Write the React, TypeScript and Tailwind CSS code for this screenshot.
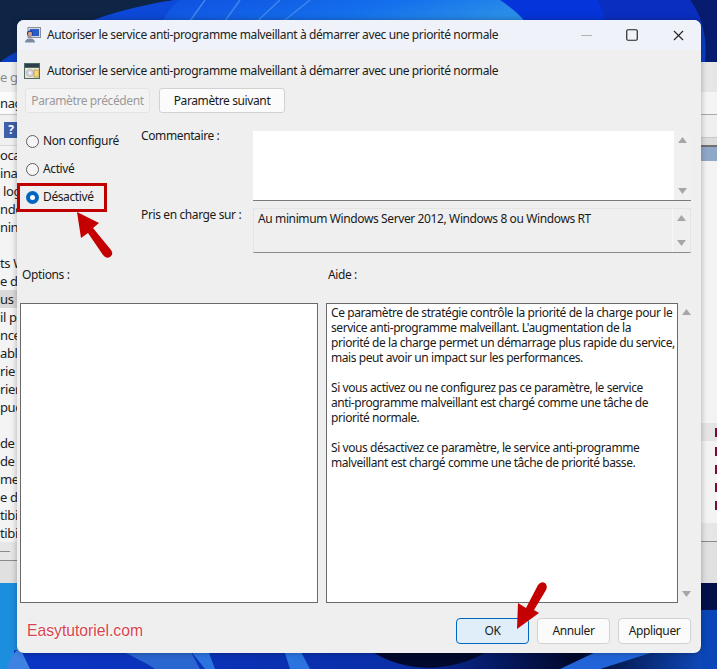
import { Minus, Square, X } from 'lucide-react'

const title = 'Autoriser le service anti-programme malveillant à démarrer avec une priorité normale'

const leftRows = [
  'ocal', 'inat', ' log', 'ndo', 'nini', '', 'ts W', 'e de', 'us M', 'il pl', 'nce', 'able', 'rie', 'rier', 'puc', '', 'de r', 'de s', 'mer', 'e de', 'tibi', 'tibi',
]

function Wallpaper() {
  return (
    <svg className="absolute inset-0" width="717" height="669" viewBox="0 0 717 669">
      <defs>
        <linearGradient id="main" x1="0" y1="0" x2="1" y2="0.3">
          <stop offset="0" stopColor="#0f4fe0" />
          <stop offset="0.6" stopColor="#1470ec" />
          <stop offset="1" stopColor="#2a8fe8" />
        </linearGradient>
        <linearGradient id="low" x1="0" y1="0" x2="1" y2="0">
          <stop offset="0" stopColor="#0b35c4" />
          <stop offset="0.55" stopColor="#0a2fa8" />
          <stop offset="0.8" stopColor="#01082a" />
          <stop offset="1" stopColor="#1050c8" />
        </linearGradient>
      </defs>
      <rect width="717" height="669" fill="#0f2546" />
      <path d="M0 62 C30 40 110 10 175 0 L717 0 L717 70 L0 70 Z" fill="#0a3fc4" />
      <path d="M70 30 C100 15 140 5 175 0 L360 0 L340 30 Z" fill="#0d49d8" />
      <path d="M158 30 C165 15 172 5 180 0 L530 0 C520 10 530 20 532 30 Z" fill="url(#main)" />
      <path d="M500 0 L598 0 C605 10 608 20 610 30 L532 30 C525 20 515 10 500 0 Z" fill="#0535da" />
      <path d="M598 0 L695 0 C702 20 702 45 700 70 L610 70 C610 40 605 15 598 0 Z" fill="#0a2fc0" />
      <path d="M690 0 L717 0 L717 62 L705 62 C708 40 702 15 690 0 Z" fill="#071c6e" />
      <path d="M205 0 L185 28 M240 0 L220 28 M280 0 L250 28 M310 0 L275 28" stroke="#3f86ee" strokeWidth="1.5" fill="none" />
      <rect y="583" width="20" height="86" fill="#1c8ede" />
      <rect x="14" y="650" width="703" height="19" fill="url(#low)" />
      <path d="M6 669 C10 658 14 652 20 648 L30 669 Z" fill="#3f82e2" />
      <path d="M120 650 C130 655 150 665 155 669 L200 669 L190 650 Z" fill="#2a66d0" />
      <path d="M190 650 L205 669 L215 669 L208 650 Z M284 650 L290 669 L310 669 L300 650 Z" fill="#2b74e0" />
      <path d="M370 650 C400 672 450 675 490 650 Z" fill="#01092c" />
      <path d="M560 669 L600 650 L660 650 L600 669 Z" fill="#2264d8" />
      <rect x="701" y="582" width="16" height="30" fill="#04104a" />
      <rect x="701" y="610" width="16" height="59" fill="#0a46b8" />
    </svg>
  )
}

function ParentLeft() {
  return (
    <div className="absolute left-0 top-[62px] flex h-[521px] w-[18px] flex-col overflow-hidden bg-[#f2f2f2] text-[13px] leading-[18px] text-[#222]">
      <div className="flex h-[30px] shrink-0 items-center whitespace-nowrap bg-[#f0f0f0] text-[#8a8a8a]">e g</div>
      <div className="flex h-[23px] shrink-0 items-center whitespace-nowrap border-b border-[#c8c8c8] bg-[#fbfbfb]">nag</div>
      <div className="flex h-[31px] shrink-0 items-center justify-end border-b border-[#d8d8d8] bg-[#f0f0f0]">
        <span className="flex h-[16px] w-[14px] items-center justify-center bg-[#3f5fa8] text-[12px] font-bold text-white">?</span>
      </div>
      <div className="shrink-0 bg-[#f4f4f4]">
        {leftRows.map((row, i) => (
          <div key={i} className={`h-[18px] whitespace-pre ${i === 8 ? 'bg-[#d9d9d9]' : ''}`}>
            {row}
          </div>
        ))}
      </div>
      <div className="flex h-[18px] shrink-0 items-center bg-[#e6e6e6]">
        <span className="h-px w-[10px] bg-[#8a8a8a]" />
      </div>
      <div className="flex-1 border-t border-[#8a8a8a] bg-[#e0e0e0]" />
    </div>
  )
}

function ParentRight() {
  return (
    <div className="absolute left-[701px] top-[62px] flex h-[521px] w-[16px] flex-col overflow-hidden bg-[#f1f1f1]">
      <div className="h-[30px] shrink-0 bg-[#e6e6e6]" />
      <div className="h-[23px] shrink-0 border-b border-[#a8a8a8] bg-[#f4f4f4]" />
      <div className="h-[22px] shrink-0 bg-[#efefef]" />
      <div className="h-[8px] shrink-0 border-t border-[#c8c8c8] bg-[#dcdcdc]" />
      <div className="h-[16px] shrink-0 border-t-2 border-[#707070] bg-[#8fa8c8]" />
      <div className="h-[262px] shrink-0 bg-[#f3f3f3]" />
      <div className="flex h-[18px] shrink-0 items-center justify-end bg-[#e4e4e4]">
        <span className="h-[9px] w-[2px] bg-[#7a0b2a]" />
      </div>
      <div className="flex h-[82px] shrink-0 flex-col items-end gap-[9px] bg-[#f3f3f3] pt-[6px]">
        <span className="h-[9px] w-[2px] bg-[#7a0b2a]" />
        <span className="h-[9px] w-[2px] bg-[#7a0b2a]" />
        <span className="h-[9px] w-[2px] bg-[#7a0b2a]" />
        <span className="h-[9px] w-[2px] bg-[#7a0b2a]" />
      </div>
      <div className="h-[18px] shrink-0 bg-[#e6e6e6]" />
      <div className="flex-1 border-t border-[#8a8a8a] bg-[#e0e0e0]" />
    </div>
  )
}

function ScrollArrows({ bg = 'bg-[#f0f0f0]' }: { bg?: string }) {
  return (
    <div className={`flex w-[17px] shrink-0 flex-col items-center justify-between py-[6px] ${bg}`}>
      <svg width="9" height="6" viewBox="0 0 9 6"><path d="M4.5 0 L9 6 L0 6 Z" fill="#a6a6a6" /></svg>
      <svg width="9" height="6" viewBox="0 0 9 6"><path d="M0 0 L9 0 L4.5 6 Z" fill="#a6a6a6" /></svg>
    </div>
  )
}

function Radio({ label, checked }: { label: string; checked?: boolean }) {
  return (
    <div className="flex h-[28px] items-center gap-[4px] text-[#1a1a1a]">
      {checked ? (
        <span className="flex h-[13px] w-[13px] items-center justify-center rounded-full bg-[#0067c0]">
          <span className="h-[5px] w-[5px] rounded-full bg-white" />
        </span>
      ) : (
        <span className="h-[13px] w-[13px] rounded-full border border-[#5f5f5f] bg-[#f5f5f5]" />
      )}
      {label}
    </div>
  )
}

function Btn({ children, primary }: { children: string; primary?: boolean }) {
  return (
    <button
      className={`h-[26px] w-[73px] rounded-[4px] border text-[#1a1a1a] ${
        primary ? 'border-[#0067c0] bg-[#e0eef9]' : 'border-[#d2d2d2] bg-[#fbfbfb]'
      }`}
    >
      {children}
    </button>
  )
}

function PolicyIcon() {
  return (
    <svg width="16" height="16" viewBox="0 0 16 16" className="shrink-0">
      <rect width="16" height="16" fill="#4a6a68" />
      <rect x="1" y="1" width="14" height="3" fill="#2b3f4a" />
      <rect x="1" y="5" width="14" height="10" fill="#efe6c8" />
      <circle cx="6" cy="10" r="3.5" fill="#d8d8e8" stroke="#8a8a9a" strokeWidth="0.5" />
      <circle cx="6" cy="10" r="1" fill="#fff" />
      <rect x="10" y="7" width="5" height="7" fill="#f4d878" stroke="#8a7a3a" strokeWidth="0.5" />
    </svg>
  )
}

function AppIcon() {
  return (
    <svg width="16" height="16" viewBox="0 0 16 16" className="shrink-0">
      <rect x="3" y="0.5" width="12.5" height="10" fill="#d4d8e0" stroke="#8a8f98" />
      <rect x="5" y="2" width="9" height="7" fill="#2a5cc8" />
      <circle cx="5" cy="6.5" r="3" fill="#1c3f9a" />
      <path d="M0 15.5 C0 10 10 10 10 15.5 Z" fill="#7a8aa0" />
      <circle cx="5" cy="7" r="2.2" fill="#d8a080" />
    </svg>
  )
}

function RedArrow({ d }: { d: string }) {
  return (
    <svg className="absolute left-0 top-0" width="717" height="669" viewBox="0 0 717 669">
      <path d={d} fill="#c40000" />
    </svg>
  )
}

export default function App() {
  return (
    <div className="relative h-[669px] w-[717px] overflow-hidden font-['Noto_Sans',sans-serif] text-[12px] leading-[16px] tracking-[-0.385px]">
      <Wallpaper />
      <ParentLeft />
      <ParentRight />

      {/* dialog */}
      <div className="absolute left-[17px] top-[20px] flex h-[633px] w-[684px] flex-col overflow-hidden rounded-[7px] bg-[#efefef] shadow-[0_0_6px_rgba(0,0,0,0.3)]">
        <div className="flex h-[30px] shrink-0 items-center bg-[#f0f2f9] pl-[8px] text-[#222]">
          <AppIcon />
          <span className="ml-[6px] whitespace-nowrap">{title}</span>
          <div className="ml-auto flex items-center pr-[14px] text-[#222]">
            <Minus size={17} strokeWidth={1.4} className="mr-[30px] text-[#b0b0b0]" />
            <Square size={14} strokeWidth={2} className="mr-[31px]" />
            <X size={17} strokeWidth={1.5} />
          </div>
        </div>

        <div className="flex h-[38px] shrink-0 items-center pl-[7px] pt-[3px] text-[#1a1a1a]">
          <PolicyIcon />
          <span className="ml-[7px] whitespace-nowrap">{title}</span>
        </div>

        <div className="flex shrink-0 gap-[9px] pl-[8px]">
          <button className="h-[25px] w-[125px] rounded-[3px] border border-[#e4e4e4] bg-[#f3f3f3] text-[#9a9a9a]">Paramètre précédent</button>
          <button className="h-[25px] w-[126px] rounded-[3px] border border-[#d2d2d2] bg-[#fbfbfb] text-[#1a1a1a]">Paramètre suivant</button>
        </div>

        <div className="mt-[18px] flex h-[122px] shrink-0">
          <div className="-mt-[4px] w-[124px] shrink-0 pl-[9px]">
            <Radio label="Non configuré" />
            <Radio label="Activé" />
            <Radio label="Désactivé" checked />
          </div>
          <div className="w-[112px] shrink-0 text-[#1a1a1a]">
            <div className="leading-[10px]">Commentaire :</div>
            <div className="mt-[66px]">Pris en charge sur :</div>
          </div>
          <div className="flex w-[438px] shrink-0 flex-col gap-[7px]">
            <div className="flex h-[71px] border-b border-[#7a7a7a] bg-white">
              <div className="flex-1" />
              <ScrollArrows />
            </div>
            <div className="flex h-[45px] border border-[#e4e4e4] border-b-[#8a8a8a] bg-[#efefef] text-[#1a1a1a]">
              <div className="flex-1 border-r border-[#f8f8f8] px-[4px] pt-[2px]">Au minimum Windows Server 2012, Windows 8 ou Windows RT</div>
              <ScrollArrows bg="bg-[#efefef]" />
            </div>
          </div>
        </div>

        <div className="mt-[14px] flex h-[16px] shrink-0 text-[#1a1a1a]">
          <div className="w-[311px] pl-[5px]">Options :</div>
          <div>Aide :</div>
        </div>

        <div className="mt-[20px] flex h-[300px] shrink-0 pl-[3px]">
          <div className="w-[298px] border border-[#6a6a6a] bg-white" />
          <div className="ml-[8px] w-[352px] whitespace-nowrap border border-[#6a6a6a] bg-white px-[4px] py-[1px] leading-[15px] tracking-[-0.43px] text-[#1a1a1a]">
            <p>
              Ce paramètre de stratégie contrôle la priorité de la charge pour le<br />
              service anti-programme malveillant. L'augmentation de la<br />
              priorité de la charge permet un démarrage plus rapide du service,<br />
              mais peut avoir un impact sur les performances.
            </p>
            <p className="mt-[15px]">
              Si vous activez ou ne configurez pas ce paramètre, le service<br />
              anti-programme malveillant est chargé comme une tâche de<br />
              priorité normale.
            </p>
            <p className="mt-[15px]">
              Si vous désactivez ce paramètre, le service anti-programme<br />
              malveillant est chargé comme une tâche de priorité basse.
            </p>
          </div>
          <ScrollArrows bg="bg-[#efefef]" />
        </div>

        <div className="mt-[15px] flex shrink-0 items-center pl-[10px] pr-[10px]">
          <span className="font-['Liberation_Sans',sans-serif] text-[15.7px] tracking-normal text-[#d8434e] [text-shadow:0_0_2px_#fff,0_0_2px_#fff]">Easytutoriel.com</span>
          <div className="ml-auto flex gap-[8px]">
            <Btn primary>OK</Btn>
            <Btn>Annuler</Btn>
            <Btn>Appliquer</Btn>
          </div>
        </div>
      </div>

      {/* annotations */}
      <div className="absolute left-[17px] top-[183px] h-[29px] w-[90px] border-[3px] border-[#c00000]" />
      <RedArrow d="M77 212 L99 223 L93 228 L111 250 Q114 254 110 257 Q106 259 103 255 L88 233 L81 238 Z" />
      <RedArrow d="M517 629 L518 603 L526 608 L538 585 Q541 581 545 583 Q548 586 546 590 L534 610 L539 613 Z" />
    </div>
  )
}
